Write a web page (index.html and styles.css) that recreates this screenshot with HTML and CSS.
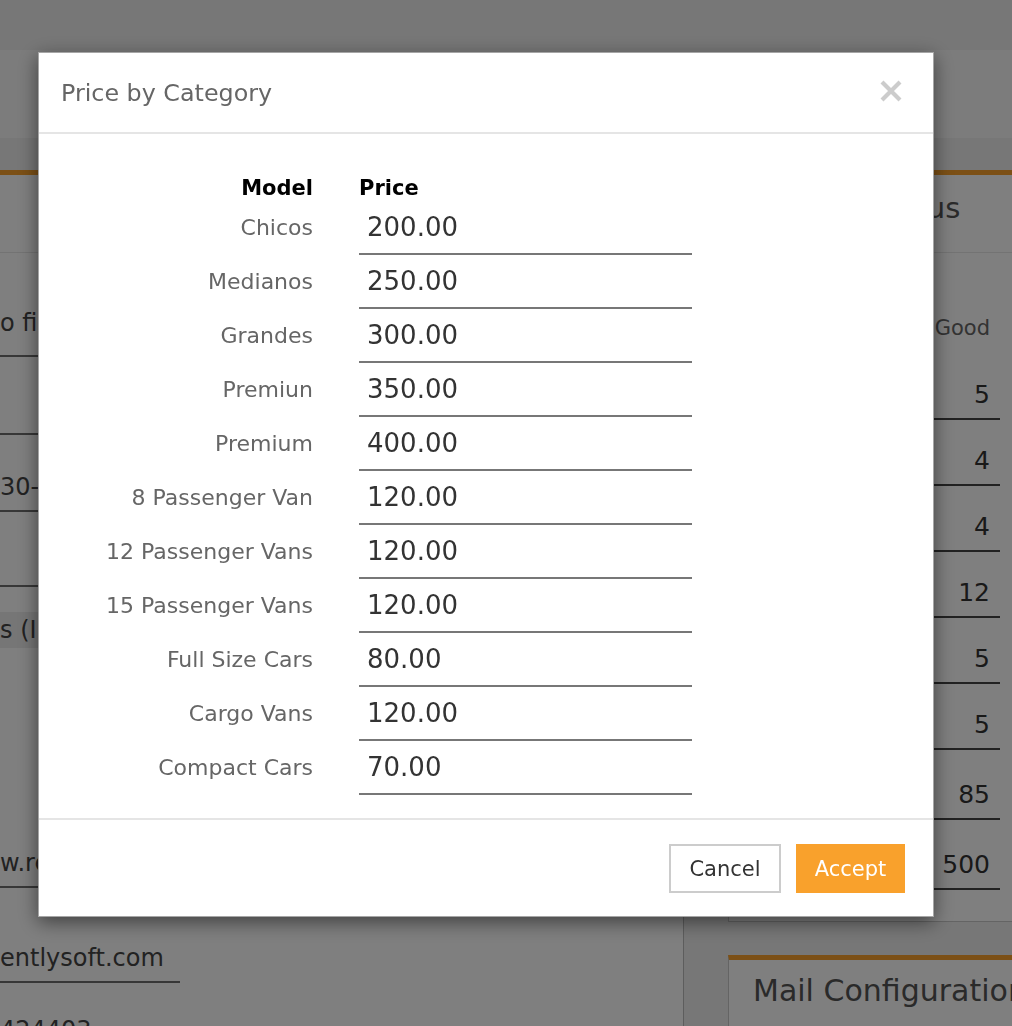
FILE: index.html
```html
<!DOCTYPE html>
<html>
<head>
    <title>Price by Category</title>
    <link rel="stylesheet" href="styles.css">
</head>
<body>
    <div class="topbar"></div>
    <div class="subbar"></div>

    <div class="main">
        <div class="left-panel">
            <div class="panel-head"></div>
            <div class="field field-tall first">o file name</div>
            <div class="field gap-38"></div>
            <div class="field gap-37">30-00-00</div>
            <div class="field gap-35"></div>
            <div class="section">s (Including taxes)</div>
            <div class="field gap-200">w.rentlysoft.com</div>
            <div class="field short gap-55">entlysoft.com</div>
            <div class="field gap-32 no-line">424403</div>
        </div>

        <div class="right-col">
            <div class="card">
                <div class="card-head">Vehicle Status</div>
                <div class="stat-head">Good</div>
                <div class="stat-row first-row"><span>5</span></div>
                <div class="stat-row"><span>4</span></div>
                <div class="stat-row"><span>4</span></div>
                <div class="stat-row"><span>12</span></div>
                <div class="stat-row"><span>5</span></div>
                <div class="stat-row"><span>5</span></div>
                <div class="stat-row tall"><span>85</span></div>
                <div class="stat-row tall"><span>500</span></div>
            </div>
            <div class="card mail">
                <div class="card-head">Mail Configuration</div>
            </div>
        </div>
    </div>

    <div class="backdrop">
        <div class="modal">
            <div class="modal-header">
                <h4>Price by Category</h4>
                <button class="close" type="button">
                    <svg width="22" height="22" viewBox="0 0 22 22">
                        <path d="M2 2 L20 20 M20 2 L2 20" stroke="#cccccc" stroke-width="4.2" fill="none"/>
                    </svg>
                </button>
            </div>
            <div class="modal-body">
                <div class="price-grid">
                    <div class="col-head model">Model</div>
                    <div class="col-head">Price</div>

                    <label>Chicos</label>
                    <input type="text" value="200.00">
                    <label>Medianos</label>
                    <input type="text" value="250.00">
                    <label>Grandes</label>
                    <input type="text" value="300.00">
                    <label>Premiun</label>
                    <input type="text" value="350.00">
                    <label>Premium</label>
                    <input type="text" value="400.00">
                    <label>8 Passenger Van</label>
                    <input type="text" value="120.00">
                    <label>12 Passenger Vans</label>
                    <input type="text" value="120.00">
                    <label>15 Passenger Vans</label>
                    <input type="text" value="120.00">
                    <label>Full Size Cars</label>
                    <input type="text" value="80.00">
                    <label>Cargo Vans</label>
                    <input type="text" value="120.00">
                    <label>Compact Cars</label>
                    <input type="text" value="70.00">
                </div>
            </div>
            <div class="modal-footer">
                <button class="btn btn-cancel" type="button">Cancel</button>
                <button class="btn btn-accept" type="button">Accept</button>
            </div>
        </div>
    </div>
</body>
</html>
```

FILE: styles.css
```css
html, body {
    margin: 0;
    height: 100%;
    overflow: hidden;
}
body {
    font-family: "DejaVu Sans", Verdana, sans-serif;
    color: #333;
    background: #fff;
    white-space: nowrap;
}

/* page behind the dialog */
.topbar {
    height: 50px;
    background: #efefef;
}
.subbar {
    height: 88px;
    background: #f9f9f9;
}
.main {
    display: flex;
    background: #eeeeee;
    padding-top: 32px;
    min-height: 900px;
}
.left-panel {
    width: 683px;
    flex: none;
    background: #fff;
    border-top: 5px solid #f9a12c;
    border-right: 1px solid #bbb;
    font-size: 24px;
    color: #444;
}
.panel-head {
    height: 77px;
    border-bottom: 1px solid #e6e6e6;
}
.field {
    line-height: 30px;
    height: 30px;
    padding-bottom: 8px;
    border-bottom: 2px solid #6e6e6e;
    overflow: hidden;
}
.field-tall { padding-bottom: 17px; }
.first { margin-top: 55px; }
.gap-38 { margin-top: 38px; }
.gap-37 { margin-top: 37px; }
.gap-35 { margin-top: 35px; }
.gap-200 { margin-top: 200px; }
.gap-55 { margin-top: 55px; }
.gap-32 { margin-top: 32px; }
.short { width: 180px; }
.no-line { border-bottom: none; }
.section {
    margin-top: 25px;
    height: 36px;
    line-height: 36px;
    background: #ececec;
}

.right-col {
    flex: 1;
    padding-left: 44px;
    min-width: 0;
}
.card {
    background: #fff;
    border-top: 5px solid #f9a12c;
    border-left: 1px solid #c8c8c8;
    border-bottom: 1px solid #c8c8c8;
    padding-bottom: 31px;
}
.card-head {
    height: 77px;
    line-height: 66px;
    padding-left: 26px;
    font-size: 29px;
    color: #555;
    border-bottom: 1px solid #e6e6e6;
    overflow: hidden;
}
.stat-head {
    padding-top: 60px;
    line-height: 30px;
    text-align: right;
    padding-right: 22px;
    font-size: 21px;
    color: #666;
}
.stat-row {
    display: flex;
    justify-content: flex-end;
    padding-right: 12px;
}
.stat-row span {
    width: 120px;
    text-align: right;
    padding: 26px 10px 8px 0;
    line-height: 30px;
    font-size: 25px;
    border-bottom: 2px solid #444;
}
.stat-row.first-row span { padding-top: 37px; }
.stat-row.tall span { padding-top: 30px; }
.card.mail {
    margin-top: 33px;
    border-bottom: none;
}
.card.mail .card-head {
    font-size: 30px;
    line-height: 62px;
    padding-left: 24px;
    border-bottom: none;
}

/* dialog */
.backdrop {
    position: fixed;
    inset: 0;
    background: rgba(0, 0, 0, 0.5);
}
.modal {
    position: absolute;
    left: 38px;
    top: 52px;
    width: 894px;
    background: #fff;
    border: 1px solid rgba(0, 0, 0, 0.35);
    box-shadow: 0 5px 18px rgba(0, 0, 0, 0.5);
}
.modal-header {
    height: 79px;
    border-bottom: 2px solid #e5e5e5;
    display: flex;
    align-items: center;
    justify-content: space-between;
    padding: 0 31px 0 22px;
}
.modal-header h4 {
    margin: 0;
    font-weight: normal;
    font-size: 23.8px;
    color: #666;
}
.close {
    border: none;
    background: none;
    padding: 0;
    width: 22px;
    height: 22px;
    margin-top: -4px;
    cursor: pointer;
}
.close svg { display: block; }

.modal-body {
    padding: 41px 0 23px;
}
.price-grid {
    display: grid;
    grid-template-columns: 274px 333px;
    column-gap: 46px;
}
.col-head {
    font-weight: bold;
    font-size: 21px;
    line-height: 26px;
    color: #000;
}
.col-head.model { text-align: right; }
.price-grid label {
    align-self: center;
    text-align: right;
    font-size: 22px;
    color: #666;
    margin-top: -2px;
}
.price-grid input {
    box-sizing: border-box;
    height: 54px;
    width: 333px;
    border: none;
    border-bottom: 2px solid #777;
    padding: 0 8px;
    font-family: inherit;
    font-size: 26px;
    color: #333;
    outline: none;
}

.modal-footer {
    border-top: 2px solid #e5e5e5;
    display: flex;
    justify-content: flex-end;
    gap: 15px;
    padding: 24px 28px 23px;
}
.btn {
    height: 49px;
    padding: 0;
    font-family: inherit;
    font-size: 21px;
    cursor: pointer;
}
.btn-cancel {
    width: 112px;
    background: #fff;
    border: 2px solid #cccccc;
    color: #333;
}
.btn-accept {
    width: 109px;
    background: #f9a12c;
    border: 2px solid #f9a12c;
    color: #fff;
}
```
